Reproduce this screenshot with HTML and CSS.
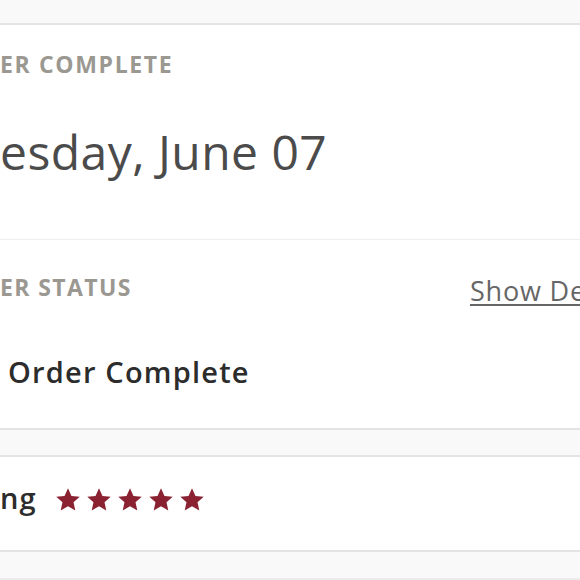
FILE: index.html
```html
<!DOCTYPE html>
<html lang="en">
<head>
<meta charset="utf-8">
<title>Order</title>
<link rel="stylesheet" href="styles.css">
</head>
<body>
<div class="band band-top"></div>

<section class="card card-date">
  <div class="line label label-complete"><span class="lead"><span>ORD</span></span><span>ER COMPLETE</span></div>
  <div class="line date"><span class="lead"><span>Wedn</span></span><span>esday, June 07</span></div>
</section>

<section class="card card-status">
  <div class="status-head">
    <div class="line label"><span class="lead"><span>ORD</span></span><span>ER STATUS</span></div>
    <a class="link" href="#">Show Details</a>
  </div>
  <div class="line status">
    <span class="lead">
      <svg class="check" viewBox="0 0 24 24" width="28" height="28"><circle cx="12" cy="12" r="11" fill="#8a2232"/><path d="M7 12.5l3.2 3.2L17 9" fill="none" stroke="#fff" stroke-width="2.2"/></svg>
    </span>
    <span class="status-text">Order Complete</span>
  </div>
</section>

<div class="band band-mid"></div>

<section class="card card-rating">
  <div class="line rating">
    <span class="lead"><span>Rati</span></span><span>ng</span>
    <span class="stars">
      <svg class="star" viewBox="0 0 24 24"><path d="M12 1.2l3.2 7 7.6.8-5.7 5.1 1.6 7.5L12 17.8l-6.7 3.8 1.6-7.5-5.7-5.1 7.6-.8z"/></svg>
      <svg class="star" viewBox="0 0 24 24"><path d="M12 1.2l3.2 7 7.6.8-5.7 5.1 1.6 7.5L12 17.8l-6.7 3.8 1.6-7.5-5.7-5.1 7.6-.8z"/></svg>
      <svg class="star" viewBox="0 0 24 24"><path d="M12 1.2l3.2 7 7.6.8-5.7 5.1 1.6 7.5L12 17.8l-6.7 3.8 1.6-7.5-5.7-5.1 7.6-.8z"/></svg>
      <svg class="star" viewBox="0 0 24 24"><path d="M12 1.2l3.2 7 7.6.8-5.7 5.1 1.6 7.5L12 17.8l-6.7 3.8 1.6-7.5-5.7-5.1 7.6-.8z"/></svg>
      <svg class="star" viewBox="0 0 24 24"><path d="M12 1.2l3.2 7 7.6.8-5.7 5.1 1.6 7.5L12 17.8l-6.7 3.8 1.6-7.5-5.7-5.1 7.6-.8z"/></svg>
    </span>
  </div>
</section>

<div class="band band-bottom"></div>
</body>
</html>
```

FILE: styles.css
```css
html, body {
  margin: 0;
  padding: 0;
}
body {
  background: #f9f9f9;
  font-family: "Open Sans", Lato, sans-serif;
  overflow: hidden;
  width: 580px;
  height: 580px;
}
.band {
  background: #f9f9f9;
  box-sizing: border-box;
}
.band-top {
  height: 25px;
  border-bottom: 2px solid #e4e4e4;
}
.band-mid {
  height: 27px;
  border-bottom: 2px solid #e4e4e4;
}
.band-bottom {
  height: 28px;
  border-bottom: 2px solid #ececec;
}
.card {
  background: #fff;
  box-sizing: border-box;
}
.card-date {
  height: 215px;
  padding-top: 28px;
  border-bottom: 1px solid #eeeeec;
}
.card-status {
  height: 190px;
  padding-top: 36px;
  border-bottom: 2px solid #e4e4e4;
}
.card-rating {
  height: 95px;
  padding-top: 26px;
  border-bottom: 2px solid #e4e4e4;
}
.line {
  display: flex;
  white-space: nowrap;
  line-height: 1;
}
.lead {
  width: 0;
  display: flex;
  justify-content: flex-end;
  flex-shrink: 0;
}
.label {
  font-size: 23px;
  font-weight: 700;
  letter-spacing: 1.4px;
  color: #9b9892;
}
.label-complete {
  letter-spacing: 1.65px;
}
.date {
  margin-top: 52px;
  font-size: 48px;
  font-weight: 400;
  letter-spacing: 0.45px;
  color: #4b4b4b;
}
.status-head {
  display: grid;
  grid-template-columns: 470px auto;
  align-items: start;
  height: 23px;
}
.link {
  font-size: 27px;
  line-height: 1;
  letter-spacing: 0.8px;
  color: #666;
  text-decoration: underline;
  text-underline-offset: 3px;
  text-decoration-thickness: 2px;
  white-space: nowrap;
  margin-top: 1px;
}
.status {
  margin-top: 58px;
  font-size: 29px;
  font-weight: 600;
  letter-spacing: 1.2px;
  color: #2c2c2c;
  gap: 8px;
}
.check {
  display: block;
  margin-right: 12px;
}
.rating {
  font-size: 29px;
  font-weight: 600;
  letter-spacing: 1.2px;
  color: #2c2c2c;
  align-items: flex-start;
}
.stars {
  display: flex;
  gap: 5px;
  margin-left: 18px;
  margin-top: 4px;
}
.star {
  width: 26px;
  height: 26px;
  fill: #8a2232;
  display: block;
}
```
